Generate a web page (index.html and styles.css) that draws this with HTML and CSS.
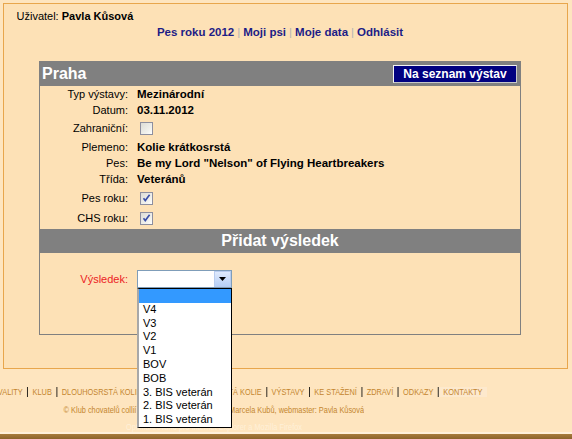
FILE: index.html
```html
<!DOCTYPE html>
<html lang="cs">
<head>
<meta charset="utf-8">
<title>Pes roku</title>
<link rel="stylesheet" href="styles.css">
</head>
<body>
<div class="frame">
  <div class="user">Uživatel: <b>Pavla Kůsová</b></div>
  <nav class="nav">
    <a href="#">Pes roku 2012</a><span class="sep">|</span><a href="#">Moji psi</a><span class="sep">|</span><a href="#">Moje data</a><span class="sep">|</span><a href="#">Odhlásit</a>
  </nav>
  <div class="panel">
    <div class="panel-head">
      <span class="title">Praha</span>
      <a class="btn" href="#">Na seznam výstav</a>
    </div>
    <div class="info">
      <span class="lab">Typ výstavy:</span><span class="val">Mezinárodní</span>
      <span class="lab">Datum:</span><span class="val">03.11.2012</span>
      <span class="lab">Zahraniční:</span><span class="val"><span class="cb"></span></span>
      <span class="lab">Plemeno:</span><span class="val">Kolie krátkosrstá</span>
      <span class="lab">Pes:</span><span class="val">Be my Lord "Nelson" of Flying Heartbreakers</span>
      <span class="lab">Třída:</span><span class="val">Veteránů</span>
      <span class="lab">Pes roku:</span><span class="val"><span class="cb"><svg width="11" height="11" viewBox="0 0 11 11"><path d="M2.5 5.2 L4.3 7.6 L8.6 1.8" fill="none" stroke="#3a4fa8" stroke-width="1.6"/></svg></span></span>
      <span class="lab">CHS roku:</span><span class="val"><span class="cb"><svg width="11" height="11" viewBox="0 0 11 11"><path d="M2.5 5.2 L4.3 7.6 L8.6 1.8" fill="none" stroke="#3a4fa8" stroke-width="1.6"/></svg></span></span>
    </div>
    <div class="bar">Přidat výsledek</div>
    <div class="result">
      <span class="lab red">Výsledek:</span>
      <div class="select">
        <span class="sel-val"></span>
        <span class="sel-btn"><svg width="7" height="4" viewBox="0 0 7 4"><path d="M0 0 H7 L3.5 4 Z" fill="#000"/></svg></span>
        <ul class="options">
          <li class="hl">&nbsp;</li>
          <li>V4</li>
          <li>V3</li>
          <li>V2</li>
          <li>V1</li>
          <li>BOV</li>
          <li>BOB</li>
          <li>3. BIS veterán</li>
          <li>2. BIS veterán</li>
          <li>1. BIS veterán</li>
        </ul>
      </div>
    </div>
  </div>
</div>
<footer class="footer">
  <div class="menu">
    <span class="fi">KVALITY</span><span class="fi">KLUB</span><span class="fi">DLOUHOSRSTÁ KOLIE</span><span class="fi">KRYTÍ</span><span class="fi">KRÁTKOSRSTÁ KOLIE</span><span class="fi">VÝSTAVY</span><span class="fi">KE STAŽENÍ</span><span class="fi">ZDRAVÍ</span><span class="fi">ODKAZY</span><span class="fi last">KONTAKTY</span>
  </div>
  <div class="copy"><span>© Klub chovatelů collií a šeltií ČR, předsedkyně p. Marcela Kubů, webmaster: Pavla Kůsová</span></div>
  <div class="opt"><span>Optimalizováno pro Internet Explorer a Mozilla Firefox</span></div>
  <div class="band"></div>
</footer>
</body>
</html>
```
FILE: styles.css
```css
html, body {
  margin: 0;
  padding: 0;
}
body {
  background: #fee5bf;
  font-family: "Liberation Sans", Arial, sans-serif;
  font-size: 11px;
  color: #000;
  height: 439px;
  overflow: hidden;
}
.frame {
  margin: 3px 4px 0 3px;
  height: 364px;
  border: 1px solid #e8a64c;
  background: #fde1b6;
}
.user {
  padding: 6px 0 0 12.5px;
  font-size: 11px;
  line-height: 13px;
}
.nav {
  margin: 3px 0 0 35px;
  width: 482px;
  text-align: center;
  font-size: 11.5px;
  font-weight: bold;
  line-height: 13px;
}
.nav a {
  color: #1c1c86;
  text-decoration: none;
}
.nav .sep {
  color: #b4b4b4;
  font-weight: normal;
  padding: 0 3px;
}
.panel {
  margin: 22px 0 0 35px;
  width: 482px;
  box-sizing: border-box;
  border: 1px solid #808080;
}
.panel-head {
  height: 24px;
  background: #808080;
  display: flex;
  align-items: center;
  justify-content: space-between;
  padding: 0 3px 0 2px;
}
.title {
  color: #fff;
  font-weight: bold;
  font-size: 16px;
}
.btn {
  width: 124px;
  height: 18px;
  box-sizing: border-box;
  background: #000080;
  color: #fff;
  font-weight: bold;
  font-size: 12px;
  text-decoration: none;
  display: flex;
  align-items: center;
  justify-content: center;
  border: 1px solid;
  border-color: #f4f4f4 #c8c8c8 #c8c8c8 #f4f4f4;
}
.info {
  display: grid;
  grid-template-columns: 88px 1fr;
  grid-template-rows: 16px 15px 22px 16px 15px 18px 20px 20px;
  column-gap: 9px;
  align-items: center;
  margin-bottom: 1px;
}
.lab {
  text-align: right;
  font-size: 11px;
}
.val {
  font-weight: bold;
  font-size: 11.5px;
  display: flex;
  align-items: center;
}
.cb {
  width: 13px;
  height: 13px;
  box-sizing: border-box;
  margin-left: 3px;
  border: 1px solid #8e8f9f;
  background: linear-gradient(135deg, #dcdcd6 0%, #f2f2ee 70%, #ffffff 100%);
  display: flex;
  align-items: center;
  justify-content: center;
}
.bar {
  height: 24px;
  background: #808080;
  color: #fff;
  font-weight: bold;
  font-size: 16px;
  line-height: 24px;
  text-align: center;
}
.result {
  height: 64px;
  padding-top: 17px;
  display: grid;
  grid-template-columns: 88px 95px;
  column-gap: 9px;
  align-items: start;
}
.result .lab {
  line-height: 18px;
}
.red {
  color: #ec1c24;
}
.select {
  position: relative;
  height: 18px;
  box-sizing: border-box;
  border: 1px solid #7f9db9;
  background: #fff;
  display: flex;
}
.sel-val {
  flex: 1;
}
.sel-btn {
  width: 17px;
  height: 16px;
  box-sizing: border-box;
  border: 1px solid #b9cdf0;
  background: linear-gradient(#dfeafd, #b8d0f6);
  display: flex;
  align-items: center;
  justify-content: center;
}
.options {
  position: absolute;
  top: 17px;
  left: -1px;
  width: 95px;
  box-sizing: border-box;
  margin: 0;
  padding: 0;
  list-style: none;
  background: #fff;
  border: 1px solid #000;
  border-left: 2px solid #a8a8a8;
  font-size: 11px;
  z-index: 5;
}
.options li {
  height: 13.8px;
  line-height: 13.8px;
  padding-left: 4px;
  white-space: nowrap;
}
.options li.hl {
  background: #3399ff;
}
.footer {
  font-family: "Liberation Sans", Arial, sans-serif;
  font-size: 9px;
  color: #c4852f;
  white-space: nowrap;
}
.menu,
.copy,
.opt {
  display: flex;
  justify-content: flex-end;
  align-items: center;
  transform: scaleX(0.82);
  transform-origin: right center;
}
.menu {
  width: 487px;
  margin-top: 17px;
  height: 12px;
}
.fi {
  flex: none;
  line-height: 10px;
  padding: 0 5.5px;
  border-left: 1.4px solid #000;
}
.fi:first-child {
  border-left: none;
}
.fi.last {
  background: #fde9cd;
}
.copy {
  width: 364px;
  margin-top: 6px;
  height: 12px;
  line-height: 12px;
}
.copy span,
.opt span {
  flex: none;
}
.opt {
  width: 302px;
  margin-top: 6px;
  height: 10px;
  line-height: 10px;
  color: #fff0d8;
}
.band {
  width: 572px;
  height: 5px;
  border-top: 2px solid #fff0da;
  background: linear-gradient(#a87c3c, #8c632c);
}
```
